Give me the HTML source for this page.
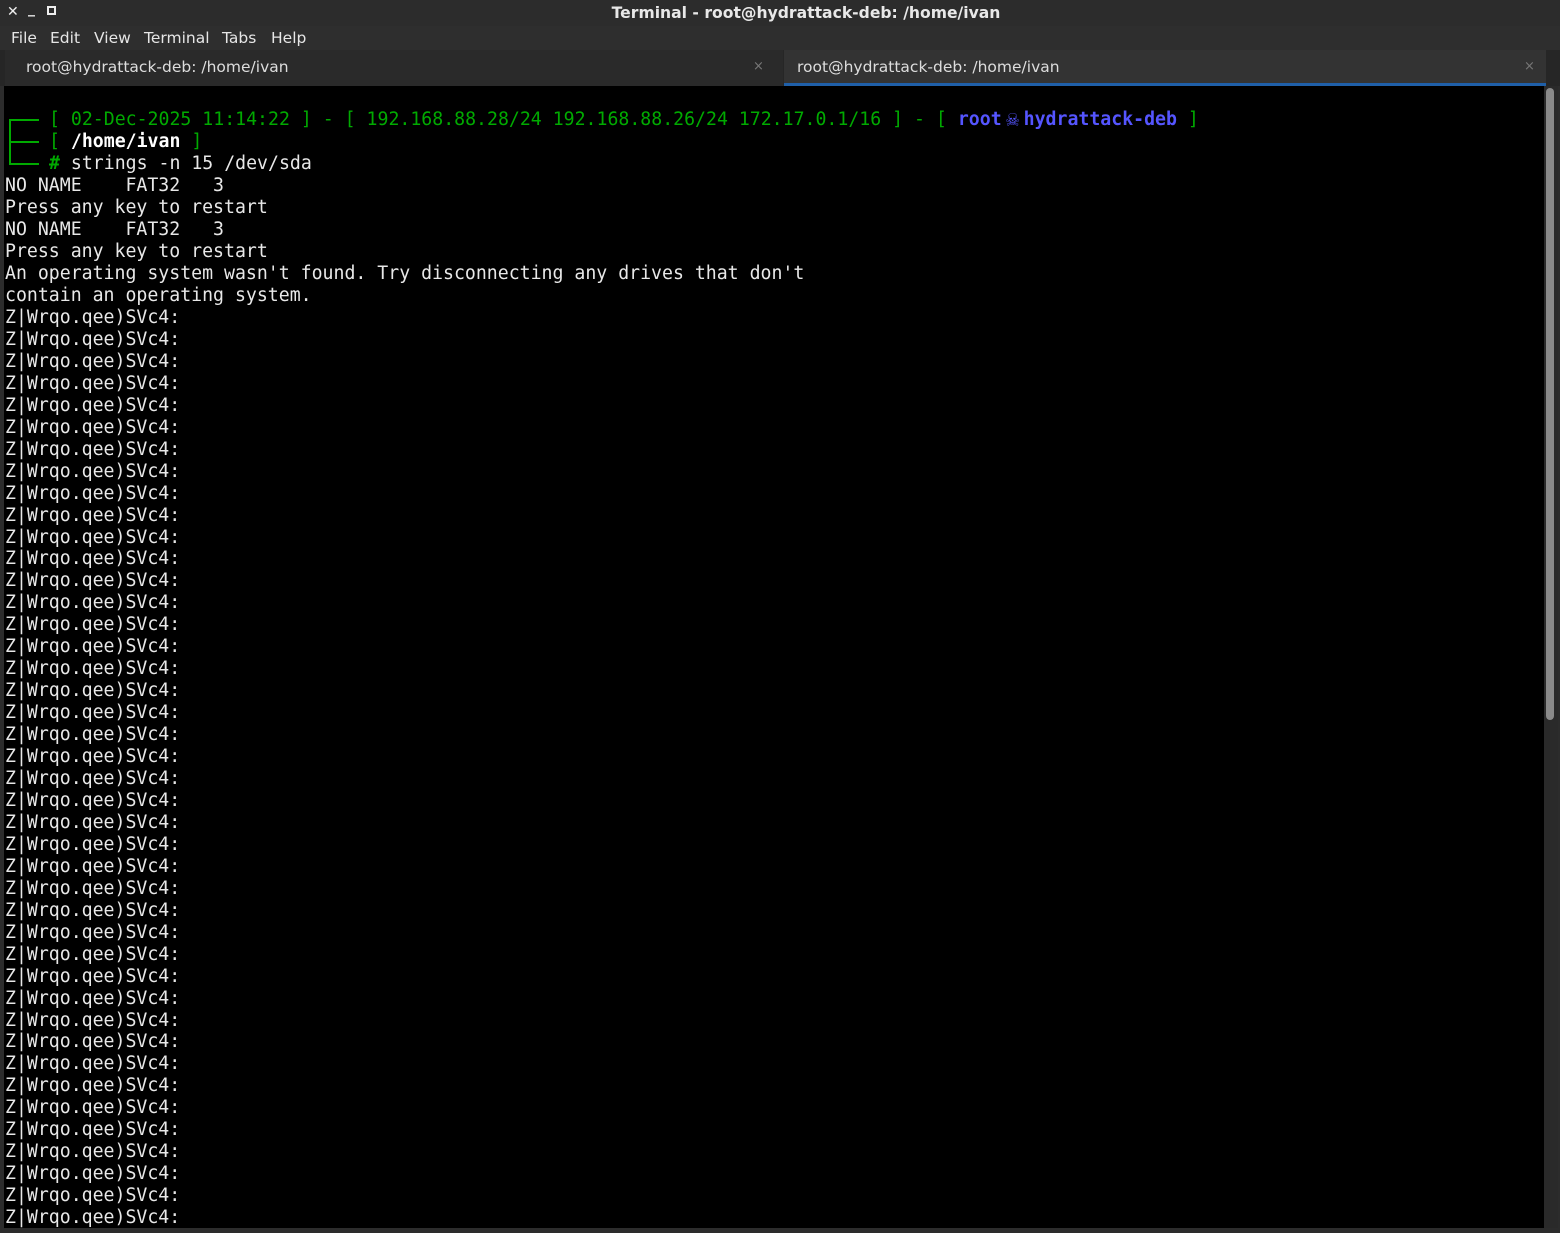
<!DOCTYPE html>
<html><head><meta charset="utf-8"><style>
*{margin:0;padding:0;box-sizing:border-box}
html,body{width:1560px;height:1233px;overflow:hidden;background:#2c2c2c;font-family:"DejaVu Sans","Liberation Sans",sans-serif}
.title{position:absolute;left:26px;top:0;width:1560px;height:26px;color:#e8e8e8;font-weight:bold;font-size:15.6px;text-align:center;line-height:26px}
.wb{position:absolute;top:4px;color:#eee;font-size:14px;font-weight:bold}
.menu{position:absolute;left:0;top:26px;width:1560px;height:24px;background:#2e2e2e;color:#e6e6e6;font-size:15.5px;line-height:24px}
.menu span{position:absolute}
.tabs{position:absolute;left:0;top:50px;width:1560px;height:36px;background:#262626}
.tab{position:absolute;top:0;height:36px;color:#ddd;font-size:15.5px;line-height:34px}
.x{position:absolute;color:#777;font-size:13px;top:0}
.term{position:absolute;left:4px;top:86px;width:1540px;height:1142px;background:#000;overflow:hidden}
.l{position:absolute;left:1px;white-space:pre;font-family:"DejaVu Sans Mono","Liberation Mono",monospace;font-size:18.2px;line-height:22px;color:#e8e8e8}
.g{color:#00aa00}.w{color:#fff;font-weight:bold}.b{color:#5555ff;font-weight:bold}
.sb{position:absolute;left:1544px;top:86px;width:14px;height:1142px;background:#2a2a2a}
.th{position:absolute;left:1546px;top:88px;width:8px;height:632px;background:#8a8a8a;border-radius:4px}
</style></head><body>
<div class="title">Terminal - root@hydrattack-deb: /home/ivan</div>
<div class="wb" style="left:7px">✕</div><div class="wb" style="left:28px;top:1px">_</div><div class="wb" style="left:47px;top:6px;width:9px;height:9px;border:2px solid #eee"></div>
<div class="menu"><span style="left:11px">File</span><span style="left:50px">Edit</span><span style="left:94px">View</span><span style="left:144px">Terminal</span><span style="left:222px">Tabs</span><span style="left:271px">Help</span></div>
<div class="tabs">
<div class="tab" style="left:5px;width:778px;background:#2a2a2a;padding-left:21px">root@hydrattack-deb: /home/ivan<span class="x" style="left:748px">×</span></div>
<div class="tab" style="left:784px;width:762px;background:#333;padding-left:13px;border-bottom:3px solid #1f5fa8">root@hydrattack-deb: /home/ivan<span class="x" style="left:740px">×</span></div>
</div>
<div class="term">
<div style="position:absolute;left:5px;top:33px;width:2px;height:46px;background:#00aa00"></div>
<div style="position:absolute;left:5px;top:33px;width:30px;height:2px;background:#00aa00"></div>
<div style="position:absolute;left:5px;top:55px;width:30px;height:2px;background:#00aa00"></div>
<div style="position:absolute;left:5px;top:77px;width:30px;height:2px;background:#00aa00"></div>
<div class="l" style="top:23px;left:45px"><span class="g">[ 02-Dec-2025 11:14:22 ] - [ 192.168.88.28/24 192.168.88.26/24 172.17.0.1/16 ] - [ </span><span class="b">root<span style="display:inline-block;width:22px;text-align:center;font-size:22px;line-height:18px;vertical-align:-1px">☠</span>hydrattack-deb</span><span class="g"> ]</span></div>
<div class="l" style="top:45px;left:45px"><span class="g">[ </span><span class="w">/home/ivan</span><span class="g"> ]</span></div>
<div class="l" style="top:67px;left:45px"><span class="g" style="font-weight:bold">#</span> strings -n 15 /dev/sda</div>
<div class="l" style="top:89px">NO NAME    FAT32   3</div>
<div class="l" style="top:111px">Press any key to restart</div>
<div class="l" style="top:133px">NO NAME    FAT32   3</div>
<div class="l" style="top:155px">Press any key to restart</div>
<div class="l" style="top:177px">An operating system wasn't found. Try disconnecting any drives that don't</div>
<div class="l" style="top:199px">contain an operating system.</div>
<div class="l" style="top:221px;line-height:21.95px">Z|Wrqo.qee)SVc4:
Z|Wrqo.qee)SVc4:
Z|Wrqo.qee)SVc4:
Z|Wrqo.qee)SVc4:
Z|Wrqo.qee)SVc4:
Z|Wrqo.qee)SVc4:
Z|Wrqo.qee)SVc4:
Z|Wrqo.qee)SVc4:
Z|Wrqo.qee)SVc4:
Z|Wrqo.qee)SVc4:
Z|Wrqo.qee)SVc4:
Z|Wrqo.qee)SVc4:
Z|Wrqo.qee)SVc4:
Z|Wrqo.qee)SVc4:
Z|Wrqo.qee)SVc4:
Z|Wrqo.qee)SVc4:
Z|Wrqo.qee)SVc4:
Z|Wrqo.qee)SVc4:
Z|Wrqo.qee)SVc4:
Z|Wrqo.qee)SVc4:
Z|Wrqo.qee)SVc4:
Z|Wrqo.qee)SVc4:
Z|Wrqo.qee)SVc4:
Z|Wrqo.qee)SVc4:
Z|Wrqo.qee)SVc4:
Z|Wrqo.qee)SVc4:
Z|Wrqo.qee)SVc4:
Z|Wrqo.qee)SVc4:
Z|Wrqo.qee)SVc4:
Z|Wrqo.qee)SVc4:
Z|Wrqo.qee)SVc4:
Z|Wrqo.qee)SVc4:
Z|Wrqo.qee)SVc4:
Z|Wrqo.qee)SVc4:
Z|Wrqo.qee)SVc4:
Z|Wrqo.qee)SVc4:
Z|Wrqo.qee)SVc4:
Z|Wrqo.qee)SVc4:
Z|Wrqo.qee)SVc4:
Z|Wrqo.qee)SVc4:
Z|Wrqo.qee)SVc4:
Z|Wrqo.qee)SVc4:</div>
</div>
<div class="sb"></div><div class="th"></div>
</body></html>
